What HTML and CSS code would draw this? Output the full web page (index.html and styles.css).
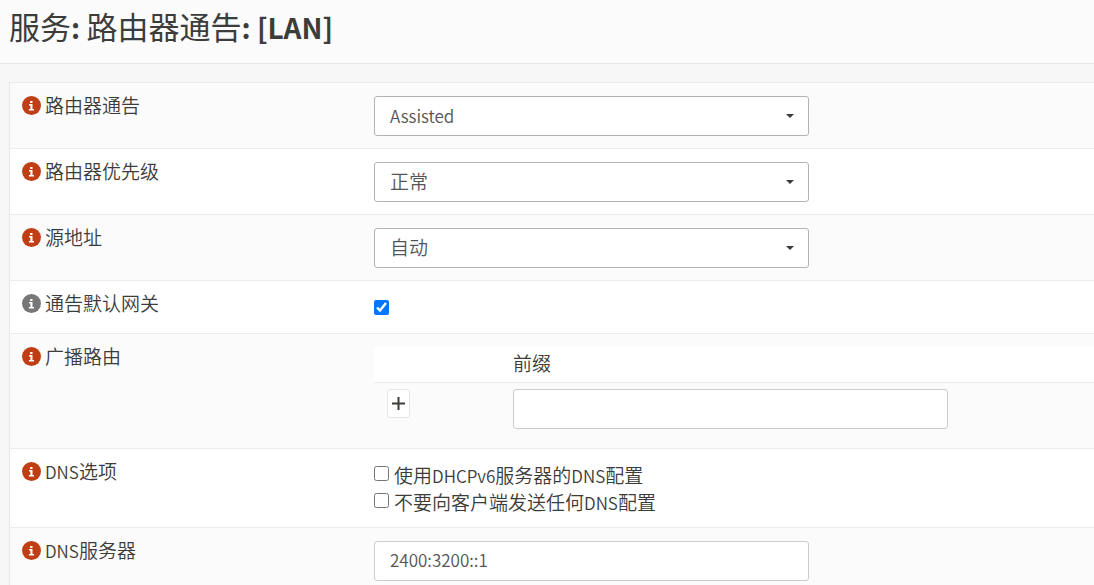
FILE: index.html
```html
<!DOCTYPE html>
<html lang="zh-CN">
<head>
  <meta charset="UTF-8">
  <meta name="viewport" content="width=device-width, initial-scale=1.0">
  <title>服务: 路由器通告: [LAN]</title>
  <link rel="stylesheet" href="styles.css">
</head>
<body>
  <svg class="sprite" aria-hidden="true">
    <symbol id="info" viewBox="0 0 19 19">
      <circle cx="9.5" cy="9.5" r="9.5"/>
      <path fill="#fff" d="M8.1 5h2.4v1.9H8.1zM7.1 8h3.4v5h1.5v1.5H6.9V13h1.5V9.4H7.1z"/>
    </symbol>
  </svg>

  <header class="page-head">
    <h1>服务<b>: </b>路由器通告<b>: [LAN]</b></h1>
  </header>

  <main class="content">
    <form>
      <table class="table">
        <tr>
          <th scope="row"><div class="name"><a href="#" class="help" aria-label="帮助"><svg><use href="#info"/></svg></a><label for="ramode">路由器通告</label></div></th>
          <td>
            <div class="select">
              <select id="ramode" class="latin"><option>Assisted</option></select>
            </div>
          </td>
        </tr>
        <tr>
          <th scope="row"><div class="name"><a href="#" class="help" aria-label="帮助"><svg><use href="#info"/></svg></a><label for="rapriority">路由器优先级</label></div></th>
          <td>
            <div class="select">
              <select id="rapriority"><option>正常</option></select>
            </div>
          </td>
        </tr>
        <tr>
          <th scope="row"><div class="name"><a href="#" class="help" aria-label="帮助"><svg><use href="#info"/></svg></a><label for="rainterface">源地址</label></div></th>
          <td>
            <div class="select">
              <select id="rainterface"><option>自动</option></select>
            </div>
          </td>
        </tr>
        <tr>
          <th scope="row"><div class="name"><span class="help muted"><svg><use href="#info"/></svg></span><label for="radefault">通告默认网关</label></div></th>
          <td>
            <div class="check single"><input type="checkbox" id="radefault" checked></div>
          </td>
        </tr>
        <tr>
          <th scope="row"><div class="name"><a href="#" class="help" aria-label="帮助"><svg><use href="#info"/></svg></a><label for="route">广播路由</label></div></th>
          <td class="wide">
            <table class="routes">
              <thead>
                <tr><th class="action"></th><th scope="col">前缀</th></tr>
              </thead>
              <tbody>
                <tr>
                  <td class="action">
                    <button type="button" class="btn-add" aria-label="添加"><svg viewBox="0 0 13 13"><path d="M6.5 0v13M0 6.5h13"/></svg></button>
                  </td>
                  <td><input type="text" id="route" class="field"></td>
                </tr>
              </tbody>
            </table>
          </td>
        </tr>
        <tr>
          <th scope="row"><div class="name"><a href="#" class="help" aria-label="帮助"><svg><use href="#info"/></svg></a><span><span class="latin">DNS</span>选项</span></div></th>
          <td>
            <div class="checks">
              <div class="check">
                <input type="checkbox" id="rasamednsasdhcp6">
                <label for="rasamednsasdhcp6">使用<span class="latin">DHCPv6</span>服务器的<span class="latin">DNS</span>配置</label>
              </div>
              <div class="check">
                <input type="checkbox" id="radisablerdnss">
                <label for="radisablerdnss">不要向客户端发送任何<span class="latin">DNS</span>配置</label>
              </div>
            </div>
          </td>
        </tr>
        <tr>
          <th scope="row"><div class="name"><a href="#" class="help" aria-label="帮助"><svg><use href="#info"/></svg></a><label for="radns1"><span class="latin">DNS</span>服务器</label></div></th>
          <td><input type="text" id="radns1" class="field latin" value="2400:3200::1"></td>
        </tr>
      </table>
    </form>
  </main>
</body>
</html>
```

FILE: styles.css
```css
* {
  box-sizing: border-box;
}

body {
  margin: 0;
  background: #f7f7f7;
  color: #3c3c3b;
  font-family: "Noto Sans CJK SC", sans-serif;
  font-size: 19px;
  font-weight: 350;
  line-height: 26px;
}

.sprite {
  position: absolute;
  width: 0;
  height: 0;
}

.page-head {
  padding: 6px 9px 17px;
  background: #fbfbfb;
  border-bottom: 1px solid #e5e5e5;
}

h1 {
  margin: 0;
  font-size: 31px;
  font-weight: 400;
  line-height: 40px;
}

h1 b {
  font-size: 28px;
  font-weight: 700;
  line-height: 1;
}

.content {
  padding: 18px 0 0 9px;
}

.table {
  width: 100%;
  border-collapse: separate;
  border-spacing: 0;
  border-left: 1px solid #e5e5e5;
  background: #fff;
}

.table th,
.table td {
  text-align: left;
  vertical-align: top;
  font-weight: 350;
}

.table > tbody > tr > th,
.table > tbody > tr > td {
  padding: 13px 13px 12px;
  border-top: 1px solid #ebebeb;
}

.table > tbody > tr > th {
  width: 351px;
  padding: 9px 12px;
}

.table > tbody > tr > td.wide {
  padding-right: 0;
}

.table > tbody > tr:nth-child(odd) {
  background: #fbfbfb;
}

.latin {
  font-size: 17px;
  line-height: 1;
}

.name {
  display: flex;
  align-items: center;
  gap: 4px;
}

.help {
  display: flex;
  color: #c03e14;
}

.help svg {
  width: 19px;
  height: 19px;
  fill: currentColor;
}

.muted {
  color: #777;
}

.select {
  position: relative;
  max-width: 435px;
}

/* caret */
.select::after {
  content: "";
  position: absolute;
  top: 18px;
  right: 15px;
  border: 4px solid transparent;
  border-top-color: #3c3c3b;
  border-bottom: 0;
  pointer-events: none;
}

select,
.field {
  display: block;
  width: 100%;
  max-width: 435px;
  height: 40px;
  padding: 0 15px 4px;
  border: 1px solid #ccc;
  border-radius: 3px;
  background: #fff;
  color: #555;
  font-family: inherit;
  font-weight: 350;
}

select {
  appearance: none;
  border-color: #b3b3b3;
  font-size: 19px;
}

select.latin {
  padding-bottom: 2px;
  font-size: 17px;
}

.field.latin {
  padding-bottom: 3px;
}

.checks {
  display: grid;
  gap: 1px;
}

.check {
  display: flex;
  align-items: center;
  gap: 5px;
}

.check input {
  width: 15px;
  height: 15px;
  margin: 0;
}

.checks input {
  margin-bottom: 4px;
}

.single {
  height: 27px;
}

.routes {
  width: 100%;
  border-collapse: separate;
  border-spacing: 0;
}

.routes thead tr {
  background: #fff;
}

.routes th {
  height: 36px;
  padding: 3px 13px 6px;
  border-bottom: 1px solid #ebebeb;
}

.routes td {
  padding: 6px 13px 7px;
}

.routes .action {
  width: 126px;
}

.btn-add {
  display: flex;
  align-items: center;
  justify-content: center;
  width: 23px;
  height: 29px;
  padding: 0;
  border: 1px solid #e5e5e5;
  border-radius: 3px;
  background: #fff;
}

.btn-add svg {
  width: 13px;
  height: 13px;
  stroke: #3c3c3b;
  stroke-width: 2;
}
```
